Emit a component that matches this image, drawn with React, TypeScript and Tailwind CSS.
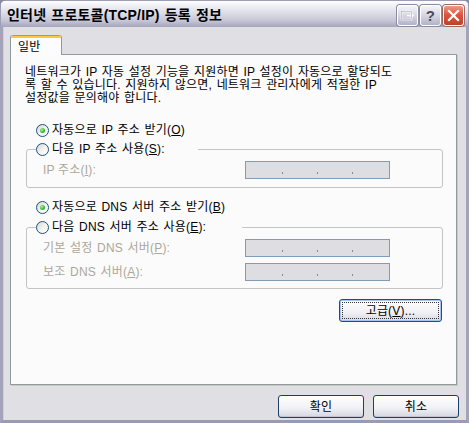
import React from "react";

const F = "font-['Liberation_Sans','Noto_Sans_CJK_KR',sans-serif]";

function Radio({ checked }: { checked?: boolean }) {
  return (
    <span className="flex h-[13px] w-[13px] shrink-0 items-center justify-center rounded-full border border-[#1C5180] bg-[linear-gradient(135deg,#d6d6d0_0%,#f4f4f2_55%,#ffffff_100%)]">
      {checked && (
        <span className="h-[5px] w-[5px] rounded-full bg-[radial-gradient(circle_at_35%_35%,#a8f0a4_0%,#3cbd38_55%,#1f9a1f_100%)]" />
      )}
    </span>
  );
}

function U({ c }: { c: string }) {
  return <span className="underline underline-offset-[1px]">{c}</span>;
}

function IpBox() {
  return (
    <div className="flex h-[18px] w-[145px] items-end border border-[#7F9DB9] bg-[#DEDDE2] pb-[4px] pl-[2px]">
      {[0, 1, 2].map((i) => (
        <div key={i} className="flex w-[35px] justify-end">
          <span className="h-[2px] w-px bg-[#8a8a8a]" />
        </div>
      ))}
    </div>
  );
}

function TitleBtn({ kind }: { kind: "tool" | "help" | "close" }) {
  if (kind === "close") {
    return (
      <div className="flex h-[21px] w-[21px] items-center justify-center rounded-[3px] border border-[#ffffff] bg-[linear-gradient(to_bottom,#ef9a88_0%,#d9573f_45%,#c2402a_100%)] shadow-[0_0_0_1px_#9a6a6a]">
        <svg width="13" height="13" viewBox="0 0 13 13">
          <path d="M2 2 L11 11 M11 2 L2 11" stroke="#ffffff" strokeWidth="2.2" strokeLinecap="square" />
        </svg>
      </div>
    );
  }
  return (
    <div className="flex h-[21px] w-[21px] items-center justify-center rounded-[3px] border border-[#ffffff] bg-[linear-gradient(to_bottom,#f4f4f8_0%,#d6d6e2_50%,#b2b2c8_100%)] shadow-[0_0_0_1px_#8a8aa2]">
      {kind === "help" ? (
        <span className="font-['Liberation_Sans',sans-serif] text-[15px] font-bold leading-none text-[#4a4a5c]">?</span>
      ) : (
        <svg width="15" height="13" viewBox="0 0 15 13">
          <rect x="1.5" y="2.5" width="10" height="8" fill="none" stroke="#ffffff" strokeWidth="1.6" />
          <path d="M7 6.5 H13 M11 4.5 L13 6.5 L11 8.5" stroke="#ffffff" strokeWidth="1.5" fill="none" />
          <rect x="1.5" y="2.5" width="10" height="8" fill="none" stroke="#7a7a90" strokeWidth="0.4" />
        </svg>
      )}
    </div>
  );
}

function PushButton({ children, focused }: { children: React.ReactNode; focused?: boolean }) {
  return (
    <div
      className={
        focused
          ? "flex h-[23px] w-[103px] items-center justify-center rounded-[3px] border border-[#1F4C8F] bg-[linear-gradient(to_bottom,#ffffff_0%,#f2f2f6_55%,#d9d9e6_100%)] p-[2px] shadow-[inset_0_0_0_1px_#a9c2ee]"
          : "flex h-[23px] w-[86px] items-center justify-center rounded-[3px] border border-[#1D3E6B] bg-[linear-gradient(to_bottom,#ffffff_0%,#f2f2f6_55%,#d6d6e3_100%)] shadow-[inset_0_-1px_0_#c3c3d4]"
      }
    >
      {focused ? (
        <div className="flex h-full w-full items-center justify-center border border-dotted border-[#333]">
          <span className="text-[12px] leading-none text-black">{children}</span>
        </div>
      ) : (
        <span className="text-[12px] leading-none text-black">{children}</span>
      )}
    </div>
  );
}

export default function App() {
  return (
    <div className={`${F} h-[423px] w-[469px] overflow-hidden bg-[#8b8ba3] text-[12px] tracking-[0.2px] text-black`}>
      <div className="flex h-full w-full flex-col overflow-hidden rounded-t-[7px]">
        {/* Title bar */}
        <div className="flex h-[27px] shrink-0 items-center justify-between border-x border-t border-[#9d9db5] bg-[linear-gradient(to_bottom,#ffffff_0%,#eeeef4_20%,#dadae5_50%,#c3c3d4_78%,#a5a5bc_100%)] pl-[6px] pr-[4px]">
          <span className="pt-[1px] text-[14px] font-bold leading-none text-black [word-spacing:1px]">
            인터넷 프로토콜(TCP/IP) 등록 정보
          </span>
          <div className="mt-[3px] flex gap-[2px]">
            <TitleBtn kind="tool" />
            <TitleBtn kind="help" />
            <TitleBtn kind="close" />
          </div>
        </div>

        {/* Body */}
        <div className="flex flex-1 flex-col border-x-[3px] border-b-[3px] border-x-[#a3a3ba] border-b-[#9a9ab2] bg-[#E0DFE3] shadow-[inset_1px_0_0_#d0d0dc]">
          {/* Tab */}
          <div className="ml-[7px] mt-[8px] flex">
            <div className="relative z-10 -mb-px flex h-[20px] w-[52px] flex-col overflow-hidden rounded-t-[3px] border-x border-[#919B9C] bg-[#FCFCFE]">
              <div className="h-[1px] bg-[#E68B2C]" />
              <div className="h-[2px] bg-[#FFC73C]" />
              <div className="flex flex-1 items-center pl-[7px] text-[12px] leading-none">일반</div>
            </div>
          </div>

          {/* Panel */}
          <div className="ml-[7px] flex h-[331px] w-[447px] flex-col border border-[#919B9C] bg-[#FBFBFC] shadow-[1px_1px_0_#c9c9c0]">
            <p className="ml-[14px] mt-[11px] text-[12px] leading-[13px] [word-spacing:1px]">
              네트워크가 IP 자동 설정 기능을 지원하면 IP 설정이 자동으로 할당되도
              <br />
              록 할 수 있습니다. 지원하지 않으면, 네트워크 관리자에게 적절한 IP
              <br />
              설정값을 문의해야 합니다.
            </p>

            <div className="ml-[25px] mt-[18px] flex h-[14px] items-center gap-[3px] [word-spacing:1px]">
              <Radio checked />
              <span className="leading-none">
                자동으로 IP 주소 받기(<U c="O" />)
              </span>
            </div>

            {/* Group 1 */}
            <div className="relative ml-[15px] mt-[12px] h-[39px] w-[417px] rounded-[3px] border border-[#C3C3C8] pl-[16px] pt-[11px]">
              <div className="absolute left-[9px] top-[-8px] flex h-[14px] w-[162px] items-center gap-[3px] bg-[#FBFBFC] [word-spacing:1px]">
                <Radio />
                <span className="leading-none">
                  다음 IP 주소 사용(<U c="S" />):
                </span>
              </div>
              <div className="flex items-center">
                <span className="w-[202px] leading-none text-[#ACA899]">
                  IP 주소(<U c="I" />):
                </span>
                <IpBox />
              </div>
            </div>

            <div className="ml-[25px] mt-[12px] flex h-[14px] items-center gap-[3px] [word-spacing:1px]">
              <Radio checked />
              <span className="leading-none">
                자동으로 DNS 서버 주소 받기(<U c="B" />)
              </span>
            </div>

            {/* Group 2 */}
            <div className="relative ml-[15px] mt-[13px] h-[62px] w-[417px] rounded-[3px] border border-[#C3C3C8] pl-[16px] pt-[11px]">
              <div className="absolute left-[9px] top-[-8px] flex h-[14px] w-[206px] items-center gap-[3px] bg-[#FBFBFC] [word-spacing:1px]">
                <Radio />
                <span className="leading-none">
                  다음 DNS 서버 주소 사용(<U c="E" />):
                </span>
              </div>
              <div className="flex flex-col gap-[6px]">
                <div className="flex items-center">
                  <span className="w-[202px] leading-none text-[#ACA899] [word-spacing:1px]">
                    기본 설정 DNS 서버(<U c="P" />):
                  </span>
                  <IpBox />
                </div>
                <div className="flex items-center">
                  <span className="w-[202px] leading-none text-[#ACA899] [word-spacing:1px]">
                    보조 DNS 서버(<U c="A" />):
                  </span>
                  <IpBox />
                </div>
              </div>
            </div>

            <div className="mr-[14px] mt-[10px] flex justify-end">
              <PushButton focused>
                고급(<U c="V" />)...
              </PushButton>
            </div>
          </div>

          {/* Bottom buttons */}
          <div className="mr-[7px] mt-[10px] flex justify-end gap-[9px]">
            <PushButton>확인</PushButton>
            <PushButton>취소</PushButton>
          </div>
        </div>
      </div>
    </div>
  );
}
